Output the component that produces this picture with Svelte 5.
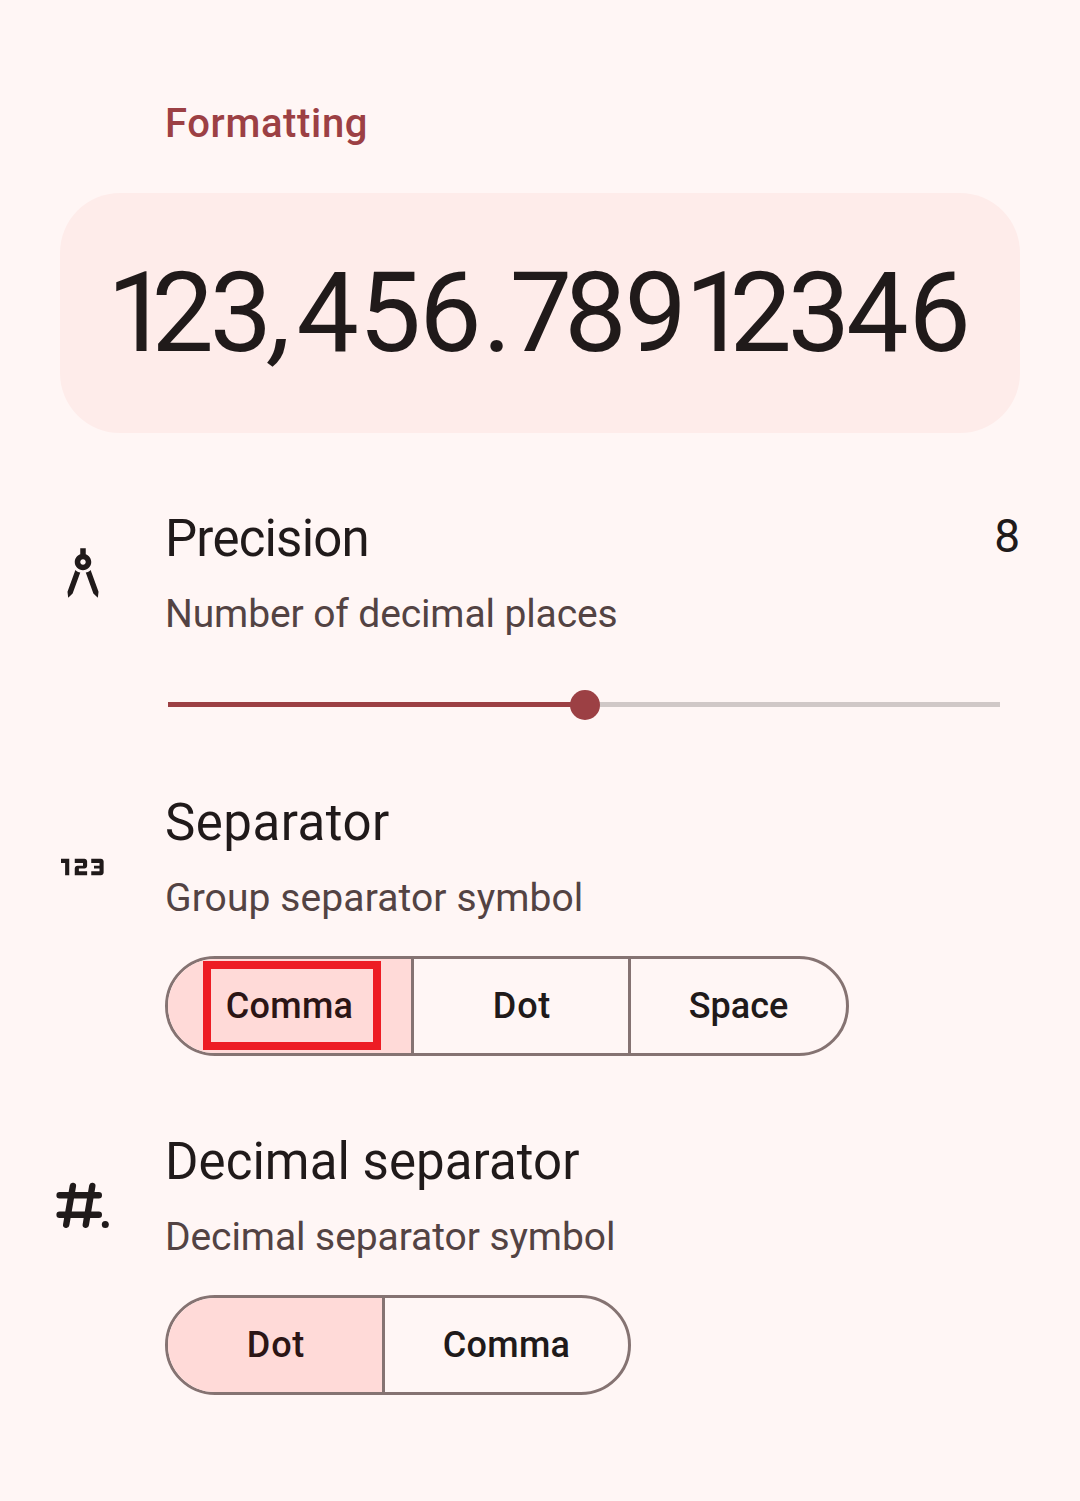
<script>
  let precision = $state(8);
  const maxPrecision = 16;
  const groupOptions = ['Comma', 'Dot', 'Space'];
  const decimalOptions = ['Dot', 'Comma'];
  let group = $state('Comma');
  let decimal = $state('Dot');

  // Optical spacing class for each character of the large number
  const glyphClass = (c) => (c === ',' ? 'comma' : c === '.' ? 'point' : 'd' + c);
  const preview = [...'123,456.78912346'];
</script>

<main>
  <h1>Formatting</h1>

  <div class="preview"><div class="number">{#each preview as c}<span class={glyphClass(c)}>{c}</span>{/each}</div></div>

  <section class="row precision">
    <svg class="icon" viewBox="0 0 24 24">
      <path d="M6.36 18.78 6.61 21l1.62-1.54 2.77-7.6c-.68-.17-1.28-.51-1.77-.98zM14.77 10.88c-.49.47-1.1.81-1.77.98l2.77 7.6L17.39 21l.26-2.22zM15 8c0-1.3-.84-2.4-2-2.82V3h-2v2.18C9.84 5.6 9 6.7 9 8c0 1.66 1.34 3 3 3s3-1.34 3-3zm-3 1c-.55 0-1-.45-1-1s.45-1 1-1 1 .45 1 1-.45 1-1 1z" />
    </svg>
    <div class="body">
      <div class="head">
        <h2 class="t-precision">Precision</h2>
        <span class="value">{precision}</span>
      </div>
      <p class="p-precision">Number of decimal places</p>
      <div class="slider">
        <div class="fill" style:width="{(precision / maxPrecision) * 100}%"></div>
        <div class="thumb"></div>
        <div class="rest"></div>
      </div>
    </div>
  </section>

  <section class="row separator">
    <svg class="icon" viewBox="0 0 24 24">
      <path d="M7 15H5.5v-4.5H4V9h3zM13.5 13.5h-3v-1h2c.55 0 1-.45 1-1V10c0-.55-.45-1-1-1H9v1.5h3v1h-2c-.55 0-1 .45-1 1V15h4.5zM19.5 14v-4c0-.55-.45-1-1-1H15v1.5h3v1h-2v1h2v1h-3V15h3.5c.55 0 1-.45 1-1z" />
    </svg>
    <div class="body">
      <h2 class="t-separator">Separator</h2>
      <p class="p-separator">Group separator symbol</p>
      <div class="segments">
        {#each groupOptions as option}
          <button class={option.toLowerCase()} class:selected={group === option} onclick={() => (group = option)}>
            <span>{option}</span>
            {#if option === 'Comma'}<i class="marker"></i>{/if}
          </button>
        {/each}
      </div>
    </div>
  </section>

  <section class="row decimal">
    <svg class="icon" viewBox="0 0 66 66">
      <g fill="none" stroke="#201a1a" stroke-width="6.4" stroke-linecap="round">
        <path d="M9.6 22.2H48.8M9.6 41.8H48.8M22.9 13 16.2 51.8M42.3 13 35.8 51.8" />
      </g>
      <circle cx="55.3" cy="51.6" r="3.5" />
    </svg>
    <div class="body">
      <h2 class="t-decimal">Decimal separator</h2>
      <p class="p-decimal">Decimal separator symbol</p>
      <div class="segments">
        {#each decimalOptions as option}
          <button class={option.toLowerCase()} class:selected={decimal === option} onclick={() => (decimal = option)}>
            <span>{option}</span>
          </button>
        {/each}
      </div>
    </div>
  </section>
</main>

<style>
  :global(body) {
    margin: 0;
    background: #fff6f5;
  }
  main {
    box-sizing: border-box;
    width: 1080px;
    height: 1501px;
    padding: 99px 60px 0;
    overflow: hidden;
    font-family: Roboto, 'Liberation Sans', sans-serif;
    color: #201a1a;
  }
  h1, h2, p {
    margin: 0;
    white-space: nowrap;
  }
  h1 {
    margin: 0 0 44px 105px;
    font-size: 40px;
    font-weight: 500;
    line-height: 50px;
    letter-spacing: 0.65px;
    color: #9c4044;
  }
  .preview {
    display: flex;
    align-items: center;
    box-sizing: border-box;
    height: 240px;
    padding-left: 47px;
    border-radius: 60px;
    background: #feecea;
    font-size: 111px;
    white-space: nowrap;
  }
  .d1 { letter-spacing: -18px; }
  .d2 { letter-spacing: -4px; }
  .d3 { letter-spacing: -4px; }
  .d4 { letter-spacing: 0; }
  .d5 { letter-spacing: -2px; }
  .d6 { letter-spacing: 1px; }
  .d7 { letter-spacing: -8px; }
  .d8, .d9, .point { letter-spacing: -2px; }
  .number .comma {
    margin-left: 5px;
    letter-spacing: 2px;
    font-style: italic;
  }
  .row {
    display: flex;
  }
  .icon {
    flex: none;
    width: 66px;
    height: 66px;
    margin: 41px 0 0 -10.4px;
    fill: #201a1a;
  }
  .precision .icon { margin-top: 30.6px; }
  .separator .icon { margin-top: 40.6px; }
  .body {
    flex: 1;
    margin-left: 49.4px;
  }
  .precision { margin-top: 76px; height: 284px; }
  .separator { height: 339px; }
  .head {
    display: flex;
    justify-content: space-between;
  }
  h2 {
    font-size: 51px;
    font-weight: 400;
    line-height: 60px;
  }
  .t-precision { letter-spacing: -0.8px; }
  .t-separator { letter-spacing: 0.5px; }
  .t-decimal { letter-spacing: 0.06px; }
  .p-precision { letter-spacing: -0.12px; }
  .p-separator { letter-spacing: 0.1px; }
  .p-decimal { letter-spacing: -0.08px; }
  .value {
    font-size: 46px;
    line-height: 54px;
  }
  p {
    margin-top: 21px;
    font-size: 39px;
    line-height: 48px;
    color: #534343;
  }
  .slider {
    display: flex;
    align-items: center;
    width: 832px;
    height: 31px;
    margin: 51px 0 0 3px;
  }
  .fill {
    height: 5px;
    background: #9c4044;
  }
  .thumb {
    flex: none;
    width: 30px;
    height: 30px;
    margin: 0 -15.5px 0 -14.5px;
    border-radius: 50%;
    background: #9c4044;
    z-index: 1;
  }
  .rest {
    flex: 1;
    height: 5px;
    background: #d0c8c7;
  }
  .segments {
    display: inline-flex;
    box-sizing: border-box;
    height: 100px;
    margin-top: 34px;
    border: 3px solid #857372;
    border-radius: 50px;
    background: #fff6f5;
  }
  button {
    position: relative;
    display: flex;
    align-items: center;
    justify-content: center;
    box-sizing: content-box;
    width: 214px;
    padding: 0;
    border: 0;
    background: none;
    font: 500 36px/44px Roboto, 'Liberation Sans', sans-serif;
    letter-spacing: 0.3px;
    color: #201a1a;
  }
  button.comma { width: 243px; }
  button.space { width: 215px; letter-spacing: 0; }
  button.dot { letter-spacing: 0.8px; }
  button.dot span { margin-left: 2px; }
  button + button { border-left: 3px solid #857372; }
  button:first-child { border-radius: 47px 0 0 47px; }
  button.selected {
    background: #ffdad8;
    color: #2c1515;
  }
  .marker {
    position: absolute;
    box-sizing: border-box;
    left: 35px;
    top: 2px;
    width: 178px;
    height: 89px;
    border: 8px solid #ed1c24;
  }
</style>
